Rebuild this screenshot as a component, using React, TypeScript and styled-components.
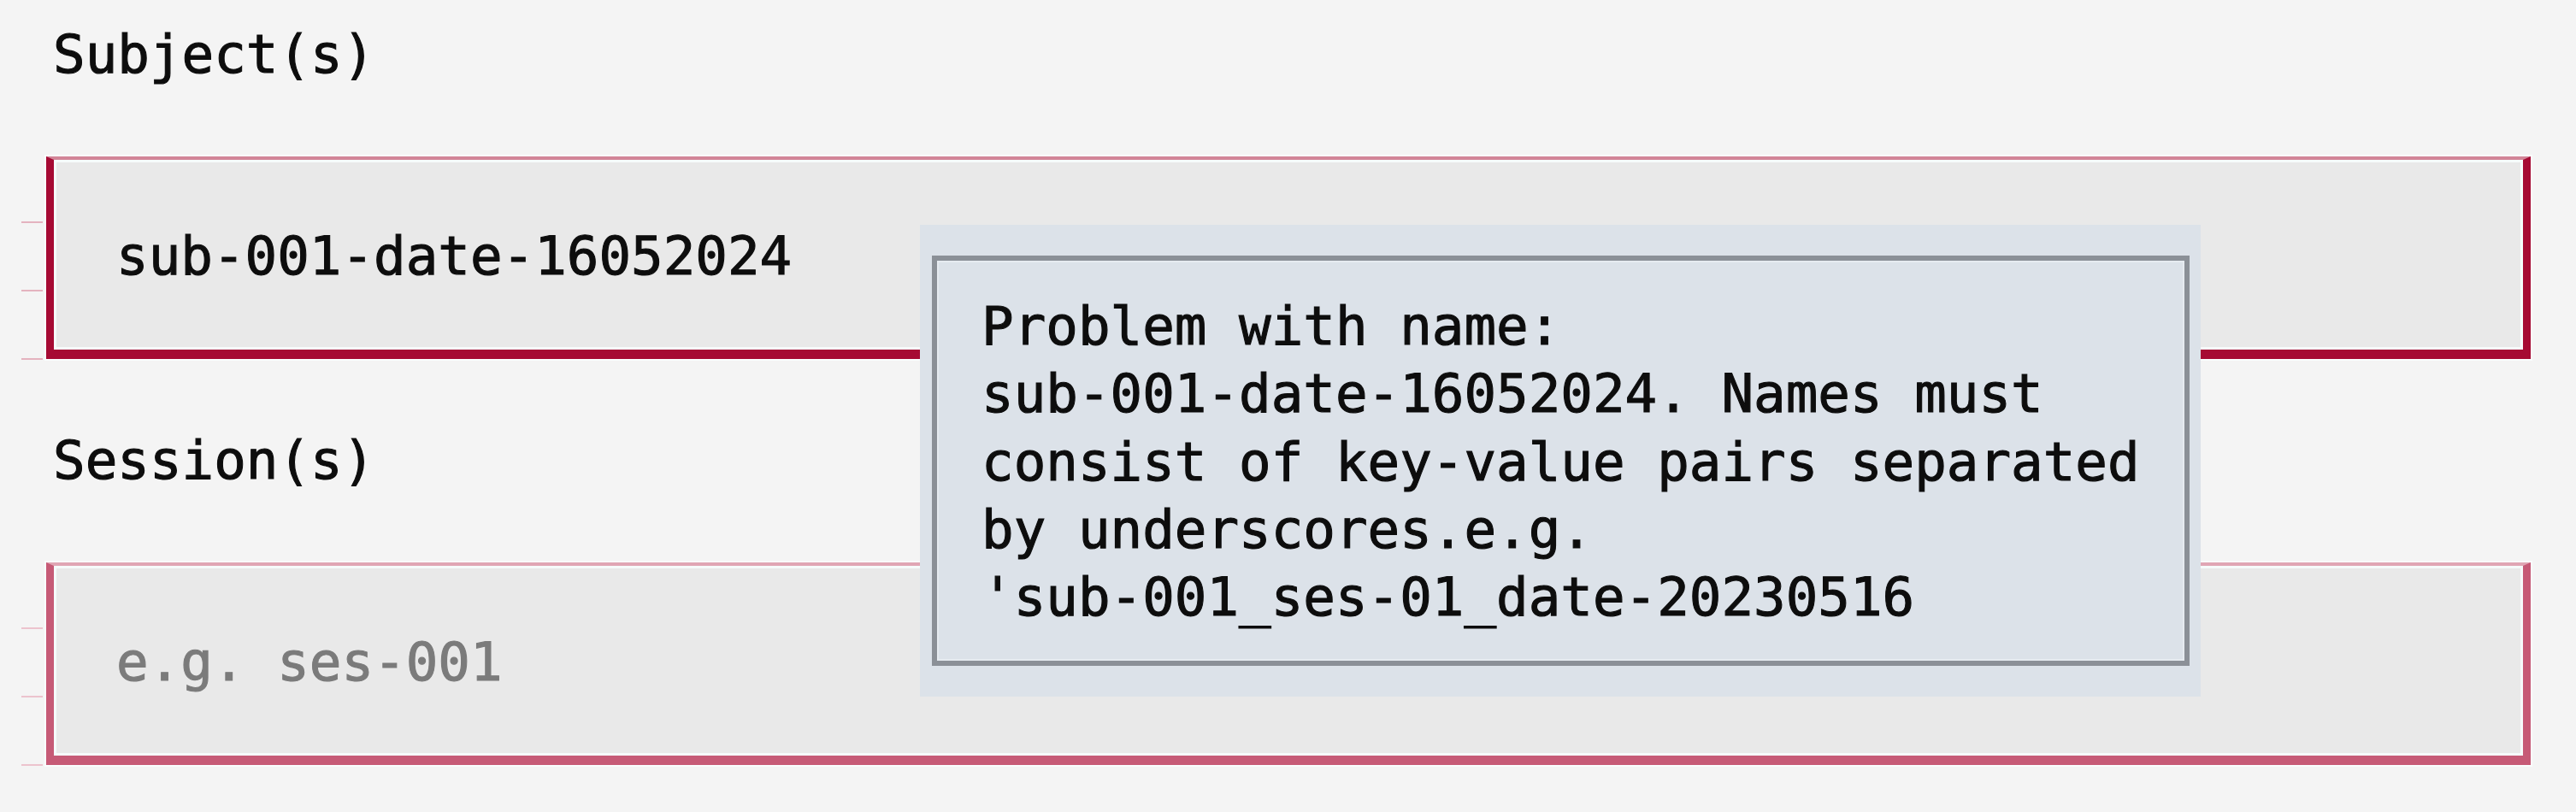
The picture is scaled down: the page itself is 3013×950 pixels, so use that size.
import React from "react";
import styled, { createGlobalStyle } from "styled-components";

const ROW = 79.3;

const GlobalStyle = createGlobalStyle`
  html, body {
    margin: 0;
    padding: 0;
    background: #f4f4f4;
  }
  body {
    font-family: "DejaVu Sans Mono", "Liberation Mono", monospace;
    font-size: 62.5px;
    color: #0d0d0d;
    -webkit-text-stroke: 1.1px currentColor;
  }
`;

const Page = styled.div`
  position: relative;
  width: 3013px;
  height: 950px;
  box-sizing: border-box;
  padding: 23.5px 53px 0 0;
  display: flex;
  flex-direction: column;
  background: #f4f4f4;
  overflow: hidden;
`;

const Section = styled.section`
  display: flex;
  flex-direction: column;
  & + & {
    margin-top: 78px;
  }
`;

const Label = styled.div`
  height: ${ROW}px;
  line-height: ${ROW}px;
  padding-left: 62px;
  margin-bottom: ${ROW + 0.5}px;
  white-space: pre;
`;

const FieldRow = styled.div`
  display: flex;
  align-items: stretch;
`;

const Gutter = styled.div<{ $tone: string }>`
  width: 54px;
  flex: none;
  display: flex;
  flex-direction: column;
  gap: 78px;
  padding-top: 76px;
  box-sizing: border-box;
  span {
    display: block;
    width: 25px;
    height: 2px;
    margin-left: 25px;
    background: ${(p) => p.$tone};
  }
`;

const InputBox = styled.div<{ $edge: string; $top: string }>`
  flex: 1;
  height: 237px;
  box-sizing: border-box;
  background: #e9e9e9;
  border-style: solid;
  border-color: ${(p) => p.$edge};
  border-top-color: ${(p) => p.$top};
  border-width: 4px 9px 11px 9px;
  box-shadow: inset 0 0 0 3px #f6fbfb, 0 0 0 2px #fafdfd;
  padding: 73.3px 0 0 73px;
`;

const FieldText = styled.div<{ $placeholder?: boolean }>`
  height: ${ROW}px;
  line-height: ${ROW}px;
  white-space: pre;
  color: ${(p) => (p.$placeholder ? "#7b7b7b" : "#0d0d0d")};
`;

const Tooltip = styled.div`
  position: absolute;
  left: 1076px;
  top: 263px;
  width: 1498px;
  height: 552px;
  box-sizing: border-box;
  background: #dce2e9;
  padding: 36px 13px 36px 14px;
  display: flex;
`;

const TooltipFrame = styled.div`
  flex: 1;
  box-sizing: border-box;
  border: 6px solid #8b9097;
  box-shadow: inset 0 0 0 2px #e6ebf0;
  padding: 37px 0 0 52px;
`;

const TooltipLine = styled.div`
  height: ${ROW}px;
  line-height: ${ROW}px;
  white-space: pre;
  color: #0d0d0d;
`;

const tooltipLines = [
  "Problem with name:",
  "sub-001-date-16052024. Names must",
  "consist of key-value pairs separated",
  "by underscores.e.g.",
  "'sub-001_ses-01_date-20230516",
];

export default function App() {
  return (
    <>
      <GlobalStyle />
      <Page>
        <Section>
          <Label>Subject(s)</Label>
          <FieldRow>
            <Gutter $tone="#e4b3bf">
              <span />
              <span />
              <span />
            </Gutter>
            <InputBox $edge="#a60a33" $top="#d28497">
              <FieldText>sub-001-date-16052024</FieldText>
            </InputBox>
          </FieldRow>
        </Section>
        <Section>
          <Label>Session(s)</Label>
          <FieldRow>
            <Gutter $tone="#ecc3cd">
              <span />
              <span />
              <span />
            </Gutter>
            <InputBox $edge="#c65a76" $top="#e0a6b4">
              <FieldText $placeholder>e.g. ses-001</FieldText>
            </InputBox>
          </FieldRow>
        </Section>
        <Tooltip>
          <TooltipFrame>
            {tooltipLines.map((line) => (
              <TooltipLine key={line}>{line}</TooltipLine>
            ))}
          </TooltipFrame>
        </Tooltip>
      </Page>
    </>
  );
}
